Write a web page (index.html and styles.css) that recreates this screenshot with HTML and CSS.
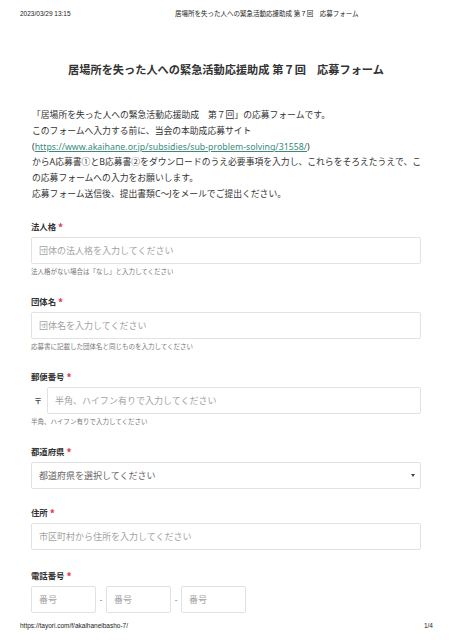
FILE: index.html
```html
<!DOCTYPE html>
<html lang="ja">
<head>
    <meta charset="UTF-8">
    <meta name="viewport" content="width=device-width, initial-scale=1.0">
    <title>居場所を失った人への緊急活動応援助成 第７回　応募フォーム</title>
    <link rel="stylesheet" href="styles.css">
</head>
<body>
    <div class="print-head">
        <span class="print-date">2023/03/29 13:15</span>
        <span class="print-title">居場所を失った人への緊急活動応援助成 第７回　応募フォーム</span>
    </div>

    <main class="form-wrap">
        <h1 class="form-title">居場所を失った人への緊急活動応援助成 第７回　応募フォーム</h1>

        <p class="intro">
            「居場所を失った人への緊急活動応援助成　第７回」の応募フォームです。<br>
            このフォームへ入力する前に、当会の本助成応募サイト<br>
            (<a href="#">https://www.akaihane.or.jp/subsidies/sub-problem-solving/31558/</a>)<br>
            からA応募書①とB応募書②をダウンロードのうえ必要事項を入力し、これらをそろえたうえで、この応募フォームへの入力をお願いします。<br>
            応募フォーム送信後、提出書類C〜Jをメールでご提出ください。
        </p>

        <div class="field">
            <div class="label">法人格 <span class="req">*</span></div>
            <div class="input placeholder">団体の法人格を入力してください</div>
            <div class="help">法人格がない場合は「なし」と入力してください</div>
        </div>

        <div class="field">
            <div class="label">団体名 <span class="req">*</span></div>
            <div class="input placeholder">団体名を入力してください</div>
            <div class="help">応募書に記載した団体名と同じものを入力してください</div>
        </div>

        <div class="field">
            <div class="label">郵便番号 <span class="req">*</span></div>
            <div class="zip-row">
                <span class="zip-mark">〒</span>
                <div class="input placeholder zip-input">半角、ハイフン有りで入力してください</div>
            </div>
            <div class="help">半角、ハイフン有りで入力してください</div>
        </div>

        <div class="field field-select">
            <div class="label">都道府県 <span class="req">*</span></div>
            <div class="input select">
                <span>都道府県を選択してください</span>
                <span class="caret"></span>
            </div>
        </div>

        <div class="field">
            <div class="label">住所 <span class="req">*</span></div>
            <div class="input placeholder">市区町村から住所を入力してください</div>
        </div>

        <div class="field">
            <div class="label">電話番号 <span class="req">*</span></div>
            <div class="tel-row">
                <div class="input placeholder tel">番号</div>
                <span class="tel-sep">-</span>
                <div class="input placeholder tel">番号</div>
                <span class="tel-sep">-</span>
                <div class="input placeholder tel">番号</div>
            </div>
        </div>
    </main>

    <div class="print-foot">
        <span>https://tayori.com/f/akaihaneibasho-7/</span>
        <span>1/4</span>
    </div>
</body>
</html>
```

FILE: styles.css
```css
:root {
    --text-color: #333;
    --muted-color: #777;
    --placeholder-color: #a3a3a3;
    --border-color: #e2e2e2;
    --link-color: #3a8a7c;
    --req-color: #e0334d;
}

body {
    margin: 0;
    padding: 0;
    width: 452px;
    height: 640px;
    position: relative;
    overflow: hidden;
    background: #fff;
    color: var(--text-color);
    font-family: "Noto Sans", "Noto Sans CJK JP", sans-serif;
}

/* print header / footer */
.print-head,
.print-foot {
    font-family: "Liberation Sans", "Noto Sans CJK JP", sans-serif;
    font-size: 6.5px;
    color: #222;
    display: flex;
    padding: 0 20px;
}

.print-head {
    padding-top: 10px;
    height: 10px;
    line-height: 8px;
}

.print-date {
    width: 155px;
}

.print-foot {
    position: absolute;
    left: 0;
    right: 0;
    top: 622px;
    line-height: 8px;
    justify-content: space-between;
    padding-right: 19px;
}

.form-wrap {
    padding: 0 31px;
}

.form-title {
    margin: 42px 0 0;
    font-size: 11.2px;
    line-height: 16px;
    text-align: center;
    font-weight: bold;
    color: #333;
}

.intro {
    margin: 30px 0 18px;
    padding-left: 1px;
    font-size: 8.8px;
    line-height: 15.8px;
}

.intro a {
    color: var(--link-color);
    text-decoration: underline;
}

.field {
    margin-bottom: 20px;
}

.field-select {
    margin-bottom: 18px;
}

.label {
    font-size: 8.4px;
    line-height: 12px;
    font-weight: bold;
    margin-bottom: 4px;
}

.req {
    color: var(--req-color);
}

.input {
    box-sizing: border-box;
    height: 27px;
    border: 1px solid var(--border-color);
    border-radius: 2px;
    padding: 0 7px;
    font-size: 9px;
    line-height: 25px;
    white-space: nowrap;
}

.placeholder {
    color: var(--placeholder-color);
}

.help {
    margin-top: 4px;
    font-size: 6.5px;
    line-height: 8px;
    color: var(--muted-color);
}

.zip-row {
    display: flex;
    align-items: center;
}

.zip-mark {
    width: 13px;
    padding-left: 3px;
    font-size: 8px;
    font-weight: bold;
    color: #444;
}

.zip-input {
    flex: 1;
}

.select {
    display: flex;
    justify-content: space-between;
    align-items: center;
    color: #666;
    padding-right: 5px;
}

.caret {
    width: 0;
    height: 0;
    border-left: 2.5px solid transparent;
    border-right: 2.5px solid transparent;
    border-top: 3px solid #444;
}

.tel-row {
    display: flex;
    align-items: center;
}

.tel {
    width: 65px;
}

.tel-sep {
    width: 10px;
    text-align: center;
    font-size: 8px;
    color: #888;
}
```
